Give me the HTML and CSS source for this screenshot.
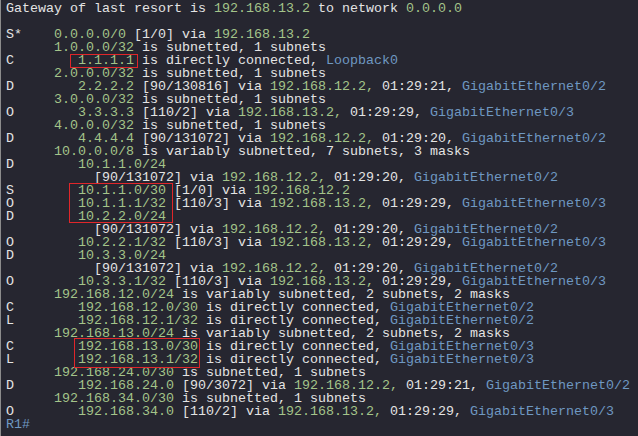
FILE: index.html
```html
<!DOCTYPE html>
<html>
<head>
<meta charset="utf-8">
<link rel="stylesheet" href="styles.css">
</head>
<body>
<div class="term">
<pre class="out">Gateway of last resort is <span class="g">192.168.13.2</span> to network <span class="g">0.0.0.0</span>

S*    <span class="g">0.0.0.0/0</span> [1/0] via <span class="g">192.168.13.2</span>
      <span class="g">1.0.0.0/32</span> is subnetted, 1 subnets
C        <span class="g">1.1.1.1</span> is directly connected, <span class="b">Loopback0</span>
      <span class="g">2.0.0.0/32</span> is subnetted, 1 subnets
D        <span class="g">2.2.2.2</span> [90/130816] via <span class="g">192.168.12.2,</span> 01:29:21, <span class="b">GigabitEthernet0/2</span>
      <span class="g">3.0.0.0/32</span> is subnetted, 1 subnets
O        <span class="g">3.3.3.3</span> [110/2] via <span class="g">192.168.13.2,</span> 01:29:29, <span class="b">GigabitEthernet0/3</span>
      <span class="g">4.0.0.0/32</span> is subnetted, 1 subnets
D        <span class="g">4.4.4.4</span> [90/131072] via <span class="g">192.168.12.2,</span> 01:29:20, <span class="b">GigabitEthernet0/2</span>
      <span class="g">10.0.0.0/8</span> is variably subnetted, 7 subnets, 3 masks
D        <span class="g">10.1.1.0/24</span>
           [90/131072] via <span class="g">192.168.12.2,</span> 01:29:20, <span class="b">GigabitEthernet0/2</span>
S        <span class="g">10.1.1.0/30</span> [1/0] via <span class="g">192.168.12.2</span>
O        <span class="g">10.1.1.1/32</span> [110/3] via <span class="g">192.168.13.2,</span> 01:29:29, <span class="b">GigabitEthernet0/3</span>
D        <span class="g">10.2.2.0/24</span>
           [90/131072] via <span class="g">192.168.12.2,</span> 01:29:20, <span class="b">GigabitEthernet0/2</span>
O        <span class="g">10.2.2.1/32</span> [110/3] via <span class="g">192.168.13.2,</span> 01:29:29, <span class="b">GigabitEthernet0/3</span>
D        <span class="g">10.3.3.0/24</span>
           [90/131072] via <span class="g">192.168.12.2,</span> 01:29:20, <span class="b">GigabitEthernet0/2</span>
O        <span class="g">10.3.3.1/32</span> [110/3] via <span class="g">192.168.13.2,</span> 01:29:29, <span class="b">GigabitEthernet0/3</span>
      <span class="g">192.168.12.0/24</span> is variably subnetted, 2 subnets, 2 masks
C        <span class="g">192.168.12.0/30</span> is directly connected, <span class="b">GigabitEthernet0/2</span>
L        <span class="g">192.168.12.1/32</span> is directly connected, <span class="b">GigabitEthernet0/2</span>
      <span class="g">192.168.13.0/24</span> is variably subnetted, 2 subnets, 2 masks
C        <span class="g">192.168.13.0/30</span> is directly connected, <span class="b">GigabitEthernet0/3</span>
L        <span class="g">192.168.13.1/32</span> is directly connected, <span class="b">GigabitEthernet0/3</span>
      <span class="g">192.168.24.0/30</span> is subnetted, 1 subnets
D        <span class="g">192.168.24.0</span> [90/3072] via <span class="g">192.168.12.2,</span> 01:29:21, <span class="b">GigabitEthernet0/2</span>
      <span class="g">192.168.34.0/30</span> is subnetted, 1 subnets
O        <span class="g">192.168.34.0</span> [110/2] via <span class="g">192.168.13.2,</span> 01:29:29, <span class="b">GigabitEthernet0/3</span>
<span class="b">R1#</span></pre>
<div class="mark mark-loop"></div>
<div class="mark mark-ten"></div>
<div class="mark mark-net13"></div>
</div>
</body>
</html>
```
FILE: styles.css
```css
html, body {
  margin: 0;
  padding: 0;
  background: #262630;
}
.term {
  position: relative;
  width: 638px;
  height: 436px;
  box-sizing: border-box;
  border-left: 1px solid #8c8c8c;
  padding: 2px 0 0 5px;
  background: #262630;
  overflow: hidden;
}
.out {
  margin: 0;
  font-family: "Liberation Mono", "DejaVu Sans Mono", monospace;
  font-size: 13.33px;
  line-height: 13px;
  color: #e4e4e4;
  white-space: pre;
}
.g { color: #a4c48a; }
.b { color: #6f98c2; }
.mark {
  position: absolute;
  border: 1px solid #e0262a;
  box-sizing: border-box;
}
.mark-loop { left: 69px; top: 54px; width: 68px; height: 14px; }
.mark-ten { left: 68px; top: 183px; width: 104px; height: 40px; }
.mark-net13 { left: 73px; top: 338px; width: 126px; height: 30px; }
```
